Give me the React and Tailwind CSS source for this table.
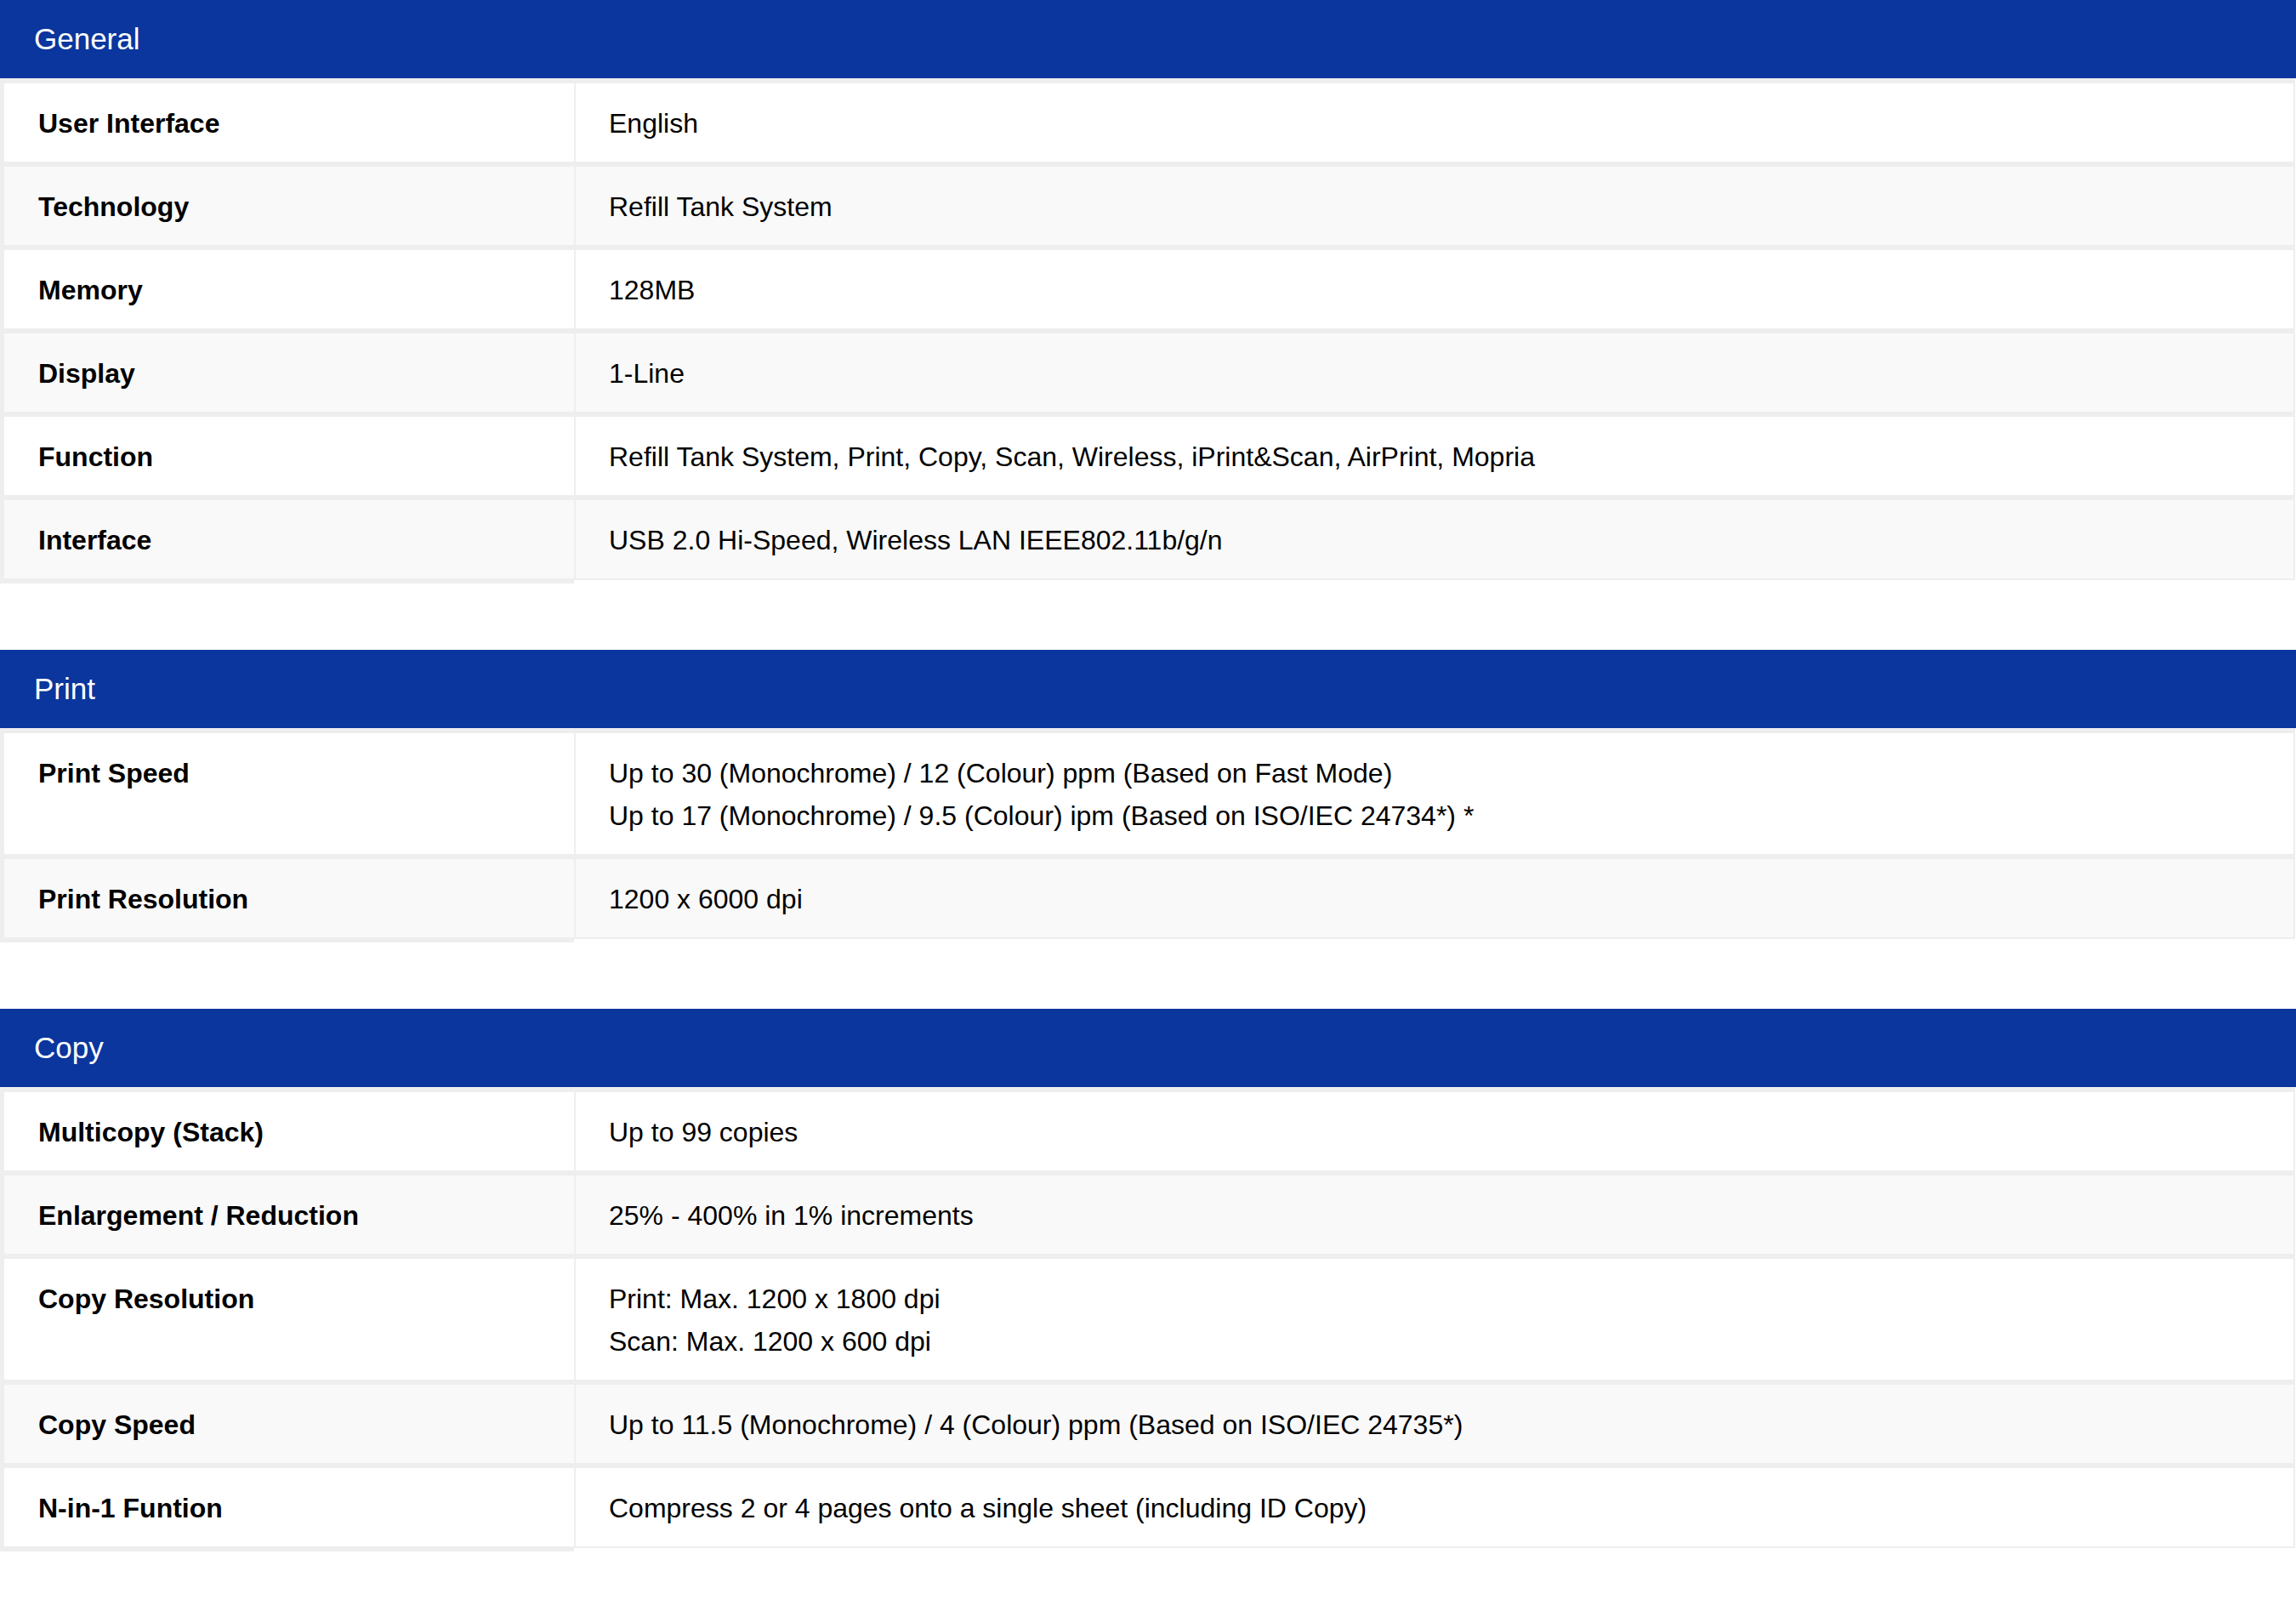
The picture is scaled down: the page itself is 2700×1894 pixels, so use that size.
const sections = [
  {
    title: "General",
    rows: [
      ["User Interface", ["English"]],
      ["Technology", ["Refill Tank System"]],
      ["Memory", ["128MB"]],
      ["Display", ["1-Line"]],
      [
        "Function",
        [
          "Refill Tank System, Print, Copy, Scan, Wireless, iPrint&Scan, AirPrint, Mopria",
        ],
      ],
      ["Interface", ["USB 2.0 Hi-Speed, Wireless LAN IEEE802.11b/g/n"]],
    ],
  },
  {
    title: "Print",
    rows: [
      [
        "Print Speed",
        [
          "Up to 30 (Monochrome) / 12 (Colour) ppm (Based on Fast Mode)",
          "Up to 17 (Monochrome) / 9.5 (Colour) ipm (Based on ISO/IEC 24734*) *",
        ],
      ],
      ["Print Resolution", ["1200 x 6000 dpi"]],
    ],
  },
  {
    title: "Copy",
    rows: [
      ["Multicopy (Stack)", ["Up to 99 copies"]],
      ["Enlargement / Reduction", ["25% - 400% in 1% increments"]],
      [
        "Copy Resolution",
        ["Print: Max. 1200 x 1800 dpi", "Scan: Max. 1200 x 600 dpi"],
      ],
      [
        "Copy Speed",
        ["Up to 11.5 (Monochrome) / 4 (Colour) ppm (Based on ISO/IEC 24735*)"],
      ],
      [
        "N-in-1 Funtion",
        ["Compress 2 or 4 pages onto a single sheet (including ID Copy)"],
      ],
    ],
  },
];

function SpecSection({ title, rows }) {
  return (
    <div className="mb-[78px]">
      <div className="h-[92px] bg-[#0a369d] flex items-center px-[40px] text-white text-[35px]">
        {title}
      </div>
      {rows.map(([label, values], i) => (
        <div
          key={label}
          className={
            "flex border-t-[6px] border-[#eeeeee] mr-px " +
            (i % 2 === 0 ? "bg-white" : "bg-[#f9f9f9]")
          }
        >
          <div className="w-[675px] shrink-0 border-l-[5px] border-[#eeeeee] pl-[40px] pt-[22px] pb-[20px] leading-[50px] font-bold">
            {label}
          </div>
          <div className="flex-1 border-l-2 border-r-2 border-[#eeeeee] pl-[39px] pt-[22px] pb-[20px] leading-[50px]">
            {values.map((v) => (
              <div key={v}>{v}</div>
            ))}
          </div>
        </div>
      ))}
      {/* bottom edge of the table */}
      <div className="flex mr-px">
        <div className="w-[675px] h-[6px] bg-[#eeeeee]" />
        <div className="flex-1 h-[2px] bg-[#eeeeee]" />
      </div>
    </div>
  );
}

export default function App() {
  return (
    <div
      className="w-[2700px] min-h-[1894px] bg-white text-black text-[32px]"
      style={{ fontFamily: '"Liberation Sans", Arial, sans-serif' }}
    >
      {sections.map((s) => (
        <SpecSection key={s.title} {...s} />
      ))}
    </div>
  );
}
